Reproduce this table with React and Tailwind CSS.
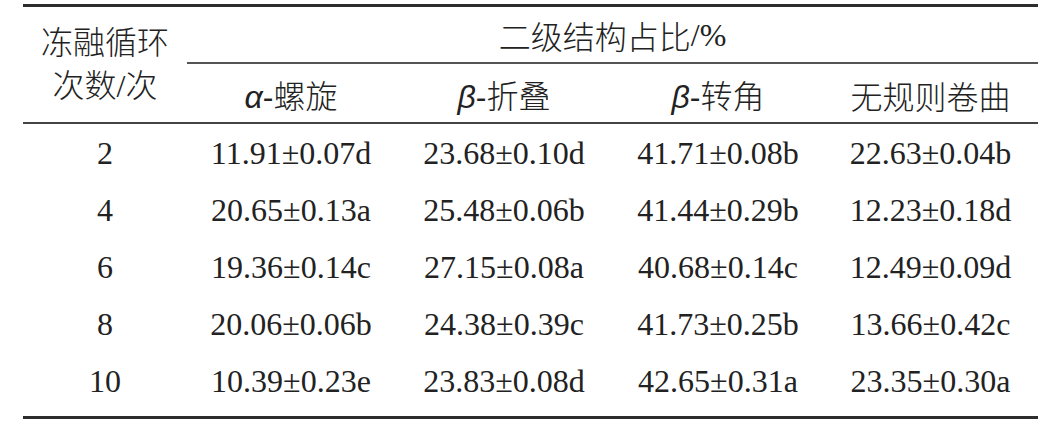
import React from "react";

const rows = [
    ["2", "11.91±0.07d", "23.68±0.10d", "41.71±0.08b", "22.63±0.04b"],
    ["4", "20.65±0.13a", "25.48±0.06b", "41.44±0.29b", "12.23±0.18d"],
    ["6", "19.36±0.14c", "27.15±0.08a", "40.68±0.14c", "12.49±0.09d"],
    ["8", "20.06±0.06b", "24.38±0.39c", "41.73±0.25b", "13.66±0.42c"],
    ["10", "10.39±0.23e", "23.83±0.08d", "42.65±0.31a", "23.35±0.30a"],
];

const Greek = ({ letter, name }) => (
    <span className="inline-flex items-baseline">
        <span className="font-['Liberation_Sans'] italic">{letter}</span>
        <span className="font-['Liberation_Sans']">-</span>
        <span className="font-['Noto_Sans_CJK_SC'] font-light">{name}</span>
    </span>
);

const App = () => {
    return (
        <div className="w-[1051px] h-[431px] bg-white pt-[4px] pl-[23px] text-[#222]">
            <div className="w-[1015px] border-t-[3px] border-b-[3px] border-[#2d2d2d]">
                {/* header */}
                <div className="grid grid-cols-[164px_208px_218px_210px_215px] h-[117px] border-b-2 border-[#444]">
                    <div className="row-span-2 flex flex-col items-center justify-center text-[32px] leading-[43px] pb-[3px]">
                        <span className="font-['Noto_Sans_CJK_SC'] font-light">冻融循环</span>
                        <span>
                            <span className="font-['Noto_Sans_CJK_SC'] font-light">次数</span>
                            <span className="font-['Liberation_Serif']">/</span>
                            <span className="font-['Noto_Sans_CJK_SC'] font-light">次</span>
                        </span>
                    </div>
                    <div className="col-span-4 h-[57px] flex items-center justify-center text-[32px] border-b-2 border-[#555]">
                        <span className="font-['Noto_Sans_CJK_SC'] font-light">二级结构占比</span>
                        <span className="font-['Liberation_Serif']">/%</span>
                    </div>
                    <div className="flex items-center justify-center text-[32px] pt-[2px]">
                        <Greek letter="α" name="螺旋" />
                    </div>
                    <div className="flex items-center justify-center text-[32px] pt-[2px]">
                        <Greek letter="β" name="折叠" />
                    </div>
                    <div className="flex items-center justify-center text-[32px] pt-[2px]">
                        <Greek letter="β" name="转角" />
                    </div>
                    <div className="flex items-center justify-center text-[32px] pt-[2px]">
                        <span className="font-['Noto_Sans_CJK_SC'] font-light">无规则卷曲</span>
                    </div>
                </div>

                {/* body */}
                <div className="pt-[1px] pb-[6px] font-['Liberation_Serif'] text-[32px]">
                    {rows.map((r) => (
                        <div key={r[0]} className="grid grid-cols-[164px_208px_218px_210px_215px] h-[57px] items-center">
                            {r.map((c, i) => (
                                <div key={i} className="text-center leading-[57px]">
                                    {c}
                                </div>
                            ))}
                        </div>
                    ))}
                </div>
            </div>
        </div>
    );
};

export default App;
